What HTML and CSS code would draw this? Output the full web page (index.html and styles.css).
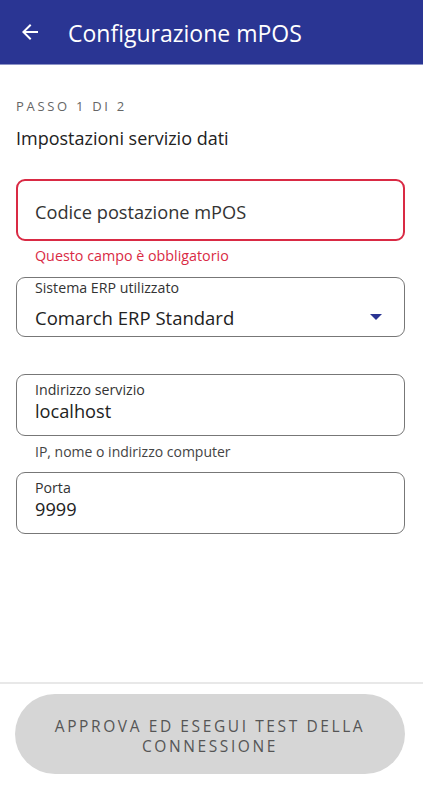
FILE: index.html
```html
<!DOCTYPE html>
<html lang="it">
<head>
<meta charset="utf-8">
<title>Configurazione mPOS</title>
<link rel="stylesheet" href="styles.css">
</head>
<body>
<div class="screen">
	<div class="toolbar">
		<svg class="back" width="24" height="24" viewBox="0 0 24 24"><path d="M20 11H7.83l5.59-5.59L12 4l-8 8 8 8 1.41-1.41L7.83 13H20v-2z" fill="#fff"/></svg>
		<div class="title">Configurazione mPOS</div>
	</div>

	<div class="content">
		<div class="step">PASSO 1 DI 2</div>
		<div class="section">Impostazioni servizio dati</div>

		<div class="field error">
			<div class="placeholder">Codice postazione mPOS</div>
		</div>
		<div class="helper err">Questo campo è obbligatorio</div>

		<div class="field select">
			<div class="label">Sistema ERP utilizzato</div>
			<div class="value big">Comarch ERP Standard</div>
			<div class="caret"></div>
		</div>

		<div class="field gap">
			<div class="label">Indirizzo servizio</div>
			<div class="value">localhost</div>
		</div>
		<div class="helper">IP, nome o indirizzo computer</div>

		<div class="field">
			<div class="label">Porta</div>
			<div class="value">9999</div>
		</div>
	</div>

	<div class="footer">
		<div class="button">APPROVA ED ESEGUI TEST DELLA CONNESSIONE</div>
	</div>
</div>
</body>
</html>
```
FILE: styles.css
```css
body {
	margin: 0;
	font-family: "Open Sans", Roboto, sans-serif;
	background: #fff;
	color: #222;
}

.screen {
	width: 423px;
	height: 793px;
	display: flex;
	flex-direction: column;
	overflow: hidden;
}

.toolbar {
	height: 65px;
	background: #2a3593;
	border-bottom: 1px solid #8c93c6;
	box-sizing: border-box;
	display: flex;
	align-items: center;
	padding-left: 18px;
}
.back {
	margin-right: 26px;
}
.title {
	color: #fff;
	font-size: 23px;
	line-height: 28px;
	padding-top: 1px;
}

.content {
	flex: 1;
	padding: 0 18px 0 16px;
}

.step {
	margin-top: 33px;
	font-size: 13px;
	line-height: 16px;
	letter-spacing: 2.7px;
	color: #666;
}
.section {
	margin-top: 13px;
	font-size: 18px;
	line-height: 22px;
	color: #222;
}

.field {
	position: relative;
	height: 62px;
	box-sizing: border-box;
	border: 1px solid #777;
	border-radius: 9px;
	padding: 7px 18px 0 18px;
}
.field.error {
	margin-top: 30px;
	border: 2px solid #d92a44;
	display: flex;
	align-items: center;
	padding: 4px 17px 0 17px;
}
.field.select {
	margin-top: 0;
	height: 60px;
	padding-top: 2px;
}
.field.gap {
	margin-top: 37px;
}
.placeholder {
	font-size: 18.2px;
	line-height: 20px;
	color: #333;
}
.label {
	font-size: 14.2px;
	color: #333;
	line-height: 16px;
}
.value {
	font-size: 18.2px;
	line-height: 20px;
	color: #222;
	margin-top: 3px;
}
.value.big {
	font-size: 18.5px;
	line-height: 22px;
	margin-top: 11px;
}
.caret {
	position: absolute;
	right: 22px;
	top: 36px;
	width: 0;
	height: 0;
	border-left: 6px solid transparent;
	border-right: 6px solid transparent;
	border-top: 6px solid #2a3593;
}

.helper {
	font-size: 14px;
	line-height: 16px;
	color: #444;
	padding: 8px 0 12px 19px;
}
.helper.err {
	color: #d92a44;
	font-size: 14.3px;
	padding: 7px 0 13px 19px;
}

.footer {
	border-top: 2px solid #e8e8e8;
	padding: 10px 18px 19px 15px;
}
.button {
	height: 80px;
	border-radius: 40px;
	background: #d6d6d6;
	color: #555;
	font-size: 15.5px;
	letter-spacing: 2.6px;
	line-height: 20px;
	text-align: center;
	display: flex;
	align-items: center;
	justify-content: center;
	padding: 3px 24px 0 24px;
	box-sizing: border-box;
}
```
